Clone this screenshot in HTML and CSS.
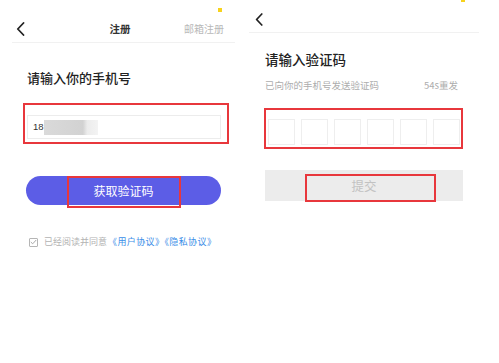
FILE: index.html
```html
<!DOCTYPE html>
<html lang="zh-CN">
<head>
<meta charset="utf-8">
<title>注册</title>
<link rel="stylesheet" href="styles.css">
</head>
<body>
<div class="screen">
  <section class="panel panel-left">
    <span class="dot dot-left"></span>
    <header class="nav nav-left">
      <span class="back"><svg width="9" height="14" viewBox="0 0 9 14"><path d="M7.5 1 L1.8 7 L7.5 13" fill="none" stroke="#222" stroke-width="1.8" stroke-linecap="round" stroke-linejoin="round"/></svg></span>
      <span class="nav-title">注册</span>
      <span class="nav-link">邮箱注册</span>
    </header>
    <div class="content content-left">
      <h1 class="title">请输入你的手机号</h1>
      <div class="phone"><span class="num">18</span><span class="blur"></span></div>
      <button class="primary">获取验证码</button>
      <div class="agree">
        <span class="check"><svg width="7" height="6" viewBox="0 0 7 6"><path d="M0.8 3 L2.7 4.8 L6.2 1" fill="none" stroke="#a8a8a8" stroke-width="1"/></svg></span>
        <span class="agree-text">已经阅读并同意</span><span class="agree-link">《用户协议》《隐私协议》</span>
      </div>
    </div>
    <span class="mark mark-phone"></span>
    <span class="mark mark-get"></span>
  </section>

  <section class="panel panel-right">
    <span class="dot dot-right"></span>
    <header class="nav nav-right">
      <span class="back"><svg width="8" height="13" viewBox="0 0 8 13"><path d="M6.8 1 L1.6 6.5 L6.8 12" fill="none" stroke="#222" stroke-width="1.7" stroke-linecap="round" stroke-linejoin="round"/></svg></span>
    </header>
    <div class="content content-right">
      <h1 class="title title-right">请输入验证码</h1>
      <div class="sub-row"><span>已向你的手机号发送验证码</span><span>54s重发</span></div>
      <div class="codes">
        <span class="code"></span><span class="code"></span><span class="code"></span><span class="code"></span><span class="code"></span><span class="code"></span>
      </div>
      <button class="submit">提交</button>
    </div>
    <span class="mark mark-code"></span>
    <span class="mark mark-submit"></span>
  </section>
</div>
</body>
</html>
```

FILE: styles.css
```css
* { box-sizing: border-box; }
html, body { margin: 0; padding: 0; background: #fff; }
body {
  font-family: "Noto Sans CJK SC", "Noto Sans", sans-serif;
  color: #222;
  width: 499px;
  height: 363px;
  overflow: hidden;
}
.screen { display: flex; align-items: flex-start; }
.panel { position: relative; }
.panel-left { width: 240px; padding-top: 14px; }
.panel-right { width: 230px; margin-left: 9px; }

.dot { position: absolute; width: 4px; height: 4px; background: #f7d21c; }
.dot-left { left: 218px; top: 8px; }
.dot-right { left: 212px; top: -2px; }

.nav { border-bottom: 1px solid #f1f1f1; }
.nav-left {
  margin: 0 5px 0 12px;
  height: 29px;
  display: grid;
  grid-template-columns: 1fr auto 1fr;
  align-items: center;
  padding: 1px 11px 0 4px;
}
.nav-right { height: 33px; padding: 13px 0 0 6px; display: flex; align-items: flex-start; }
.back { display: flex; }
.back svg { display: block; }
.nav-title { font-size: 10.5px; font-weight: 700; color: #333; line-height: 14px; }
.nav-link { justify-self: end; font-size: 10px; color: #b8b8b8; line-height: 14px; }

.content-left { padding: 0 16px 0 27px; }
.content-right { padding: 0 16px 0 16px; }

.title { margin: 27px 0 0; font-size: 13px; line-height: 16px; font-weight: 500; color: #222; }
.title-right { margin-top: 18px; font-size: 13.5px; }

.phone {
  margin-top: 29px;
  width: 194px;
  height: 24px;
  border: 1px solid #ececec;
  display: flex;
  align-items: center;
  padding-left: 5px;
}
.num { font-family: "Liberation Sans", sans-serif; font-size: 9.5px; color: #333; line-height: 10px; }
.blur {
  width: 54px;
  height: 15px;
  margin-left: 0;
  background: linear-gradient(to right, #dadada 0, #d2d2d2 72%, #ececec 80%, #f3f3f3 100%);
  filter: blur(0.6px);
}

.primary {
  display: block;
  margin: 37px 0 0 -1px;
  width: 195px;
  height: 29px;
  border: 0;
  border-radius: 15px;
  background: #5c5de6;
  color: #fff;
  font-family: inherit;
  font-size: 12px;
  line-height: 29px;
  padding: 0;
}

.agree {
  margin: 31px 0 0 2px;
  display: flex;
  align-items: center;
  height: 12px;
  font-size: 9px;
  line-height: 12px;
}
.check {
  width: 9px; height: 9px;
  border: 1px solid #b5b5b5;
  border-radius: 1px;
  display: flex; align-items: center; justify-content: center;
  margin-right: 6px;
}
.check svg { display: block; }
.agree-text { color: #b3b3b3; }
.agree-link { color: #3b8ee8; margin-left: 1px; letter-spacing: 0.4px; }

.sub-row {
  margin: 12px 5px 0 0;
  display: flex;
  justify-content: space-between;
  font-size: 9.5px;
  line-height: 12px;
  color: #adadad;
}
.codes { margin: 28px 0 0 3px; display: flex; gap: 6px; }
.code { width: 27px; height: 26px; border: 1px solid #eeeeee; }

.submit {
  display: block;
  margin-top: 25px;
  width: 198px;
  height: 31px;
  border: 0;
  background: #ececec;
  color: #c2c2c2;
  font-family: inherit;
  font-size: 12.5px;
  padding: 0;
}

.mark { position: absolute; border: 2px solid #e8373c; }
.mark-phone { left: 23px; top: 103px; width: 206px; height: 41px; border-width: 2.5px; }
.mark-get { left: 67px; top: 176px; width: 114px; height: 32px; }
.mark-code { left: 15px; top: 108px; width: 199px; height: 41px; }
.mark-submit { left: 56px; top: 174px; width: 131px; height: 28px; }
```
